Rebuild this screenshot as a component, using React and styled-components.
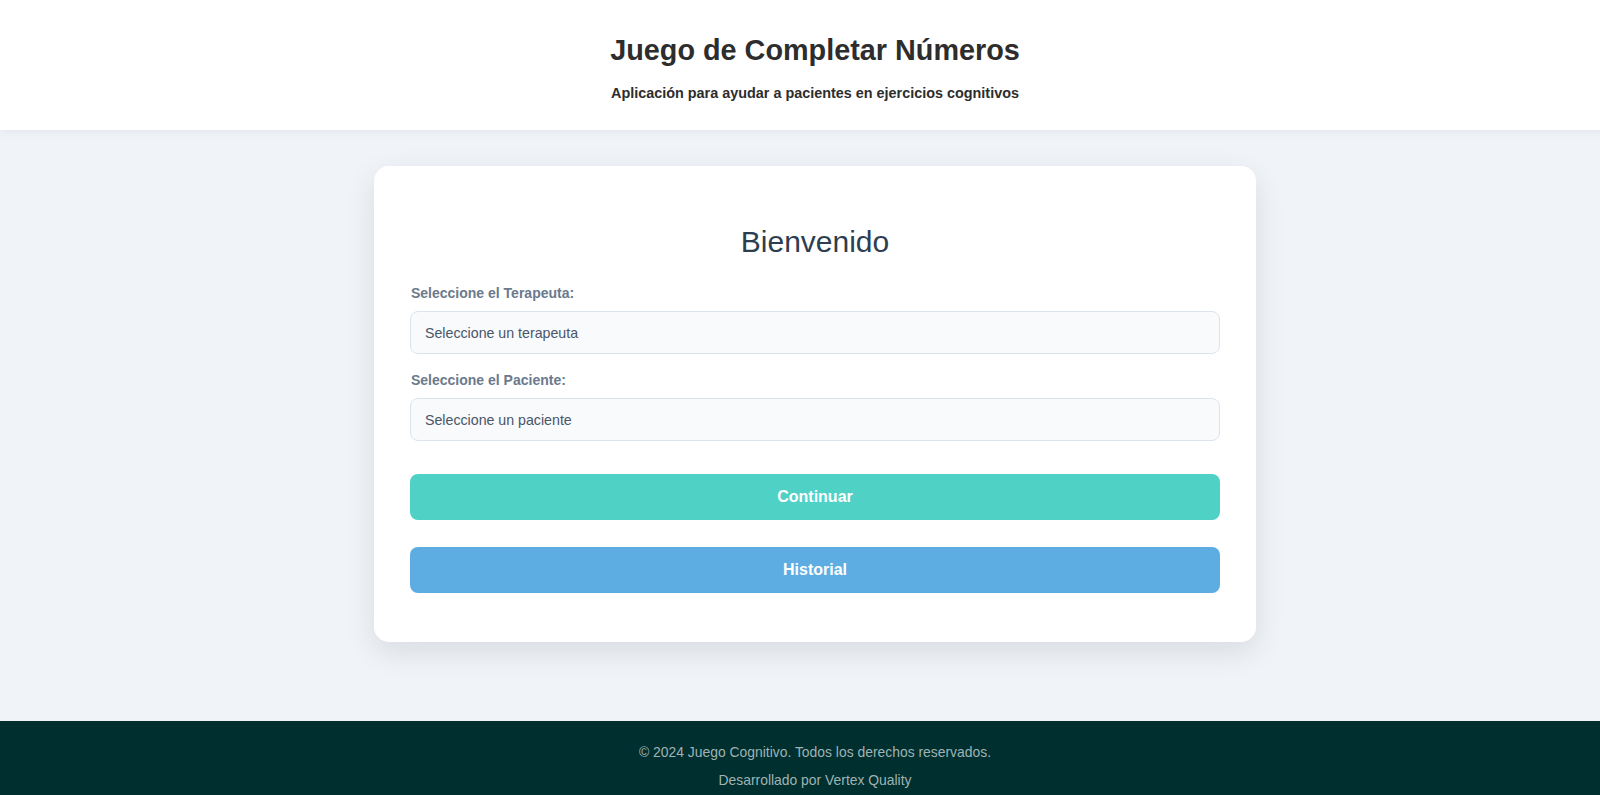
import React from "react";
import styled, { createGlobalStyle } from "styled-components";

const GlobalStyle = createGlobalStyle`
  *, *::before, *::after { box-sizing: border-box; }
  html, body {
    margin: 0;
    padding: 0;
    overflow: hidden;
    background: #f0f4f8;
    font-family: "Liberation Sans", Arial, sans-serif;
  }
`;

const Page = styled.div`
  position: relative;
  min-width: 1630px;
  min-height: 100vh;
  display: flex;
  flex-direction: column;
  background: #f0f4f8;
`;

const Header = styled.header`
  background: #ffffff;
  padding: 33px 0 28px;
  display: flex;
  flex-direction: column;
  align-items: center;
  gap: 17px;
  box-shadow: 0 2px 10px rgba(0, 0, 0, 0.06);
  position: relative;
  z-index: 1;
`;

const Title = styled.h1`
  margin: 0;
  font-size: 28.8px;
  line-height: 34px;
  font-weight: 700;
  color: #2d2d2d;
`;

const Subtitle = styled.p`
  margin: 0;
  font-size: 14.4px;
  line-height: 18px;
  font-weight: 700;
  color: #2d2d2d;
`;

const Main = styled.main`
  flex: 1;
  display: flex;
  justify-content: center;
  align-items: flex-start;
  padding-top: 36px;
`;

const Card = styled.section`
  width: 882px;
  background: #ffffff;
  border-radius: 15px;
  padding: 36px 36px 49px;
  box-shadow: 0 10px 30px rgba(0, 0, 0, 0.1);
  display: flex;
  flex-direction: column;
`;

const CardTitle = styled.h2`
  margin: 22px 0 25px;
  text-align: center;
  font-size: 30px;
  line-height: 36px;
  font-weight: 400;
  color: #2c3e50;
`;

const Field = styled.div`
  display: flex;
  flex-direction: column;
  gap: 9px;
  margin-bottom: ${(p) => p.$mb || 0}px;
`;

const Label = styled.label`
  font-size: 14px;
  line-height: 17px;
  font-weight: 700;
  color: #6b7a8d;
  padding-left: 1px;
`;

const SelectBox = styled.div`
  height: 43px;
  display: flex;
  align-items: center;
  padding: 0 14px;
  background: #f8fafc;
  border: 1px solid #dde3ea;
  border-radius: 8px;
  font-size: 14.2px;
  color: #4a5568;
`;

const Button = styled.button`
  height: 46px;
  margin-top: ${(p) => p.$mt}px;
  border: none;
  border-radius: 8px;
  background: ${(p) => p.$bg};
  color: #ffffff;
  font-family: "Liberation Sans", Arial, sans-serif;
  font-size: 16px;
  font-weight: 700;
  cursor: pointer;
`;

const Footer = styled.footer`
  background: #002f2f;
  padding: 21px 0 5px;
  display: flex;
  flex-direction: column;
  align-items: center;
  gap: 8px;
`;

const FooterText = styled.p`
  margin: 0;
  font-size: 13.9px;
  line-height: 20px;
  color: #9fb3b3;
`;

const FloatingBubble = styled.div`
  position: absolute;
  left: 1612px;
  top: 580px;
  width: 50px;
  height: 50px;
  border-radius: 50%;
  background: #ffffff;
  box-shadow: 0 4px 14px rgba(0, 0, 0, 0.1);
`;

export default function App() {
  return (
    <>
      <GlobalStyle />
      <Page>
        <Header>
          <Title>Juego de Completar Números</Title>
          <Subtitle>Aplicación para ayudar a pacientes en ejercicios cognitivos</Subtitle>
        </Header>
        <Main>
          <Card>
            <CardTitle>Bienvenido</CardTitle>
            <Field $mb={18}>
              <Label>Seleccione el Terapeuta:</Label>
              <SelectBox>Seleccione un terapeuta</SelectBox>
            </Field>
            <Field>
              <Label>Seleccione el Paciente:</Label>
              <SelectBox>Seleccione un paciente</SelectBox>
            </Field>
            <Button $mt={33} $bg="#4fd1c5">Continuar</Button>
            <Button $mt={27} $bg="#5dade2">Historial</Button>
          </Card>
        </Main>
        <Footer>
          <FooterText>© 2024 Juego Cognitivo. Todos los derechos reservados.</FooterText>
          <FooterText>Desarrollado por Vertex Quality</FooterText>
        </Footer>
        <FloatingBubble />
      </Page>
    </>
  );
}
